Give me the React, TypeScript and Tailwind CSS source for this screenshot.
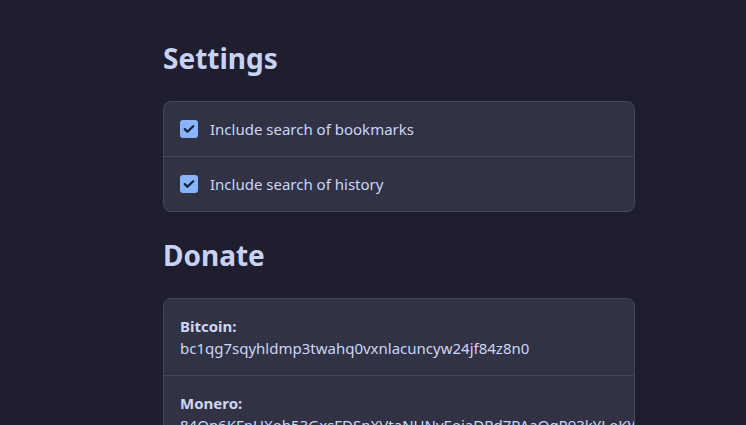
import React from "react";

const settings = [
  { id: "bookmarks", label: "Include search of bookmarks", checked: true },
  { id: "history", label: "Include search of history", checked: true },
];

const donations = [
  { name: "Bitcoin", address: "bc1qg7sqyhldmp3twahq0vxnlacuncyw24jf84z8n0" },
  {
    name: "Monero",
    address:
      "84Qp6KFnUXoh53GxsFDSnXVtaNUNvEoiaDRd7PAaQgP93kYLoKWBgQMhZCBb2AKd6JwjGKk2ZNmhLNjcnVJ9CMiF7Lu3yVb",
  },
];

const CheckIcon = () => (
  <svg viewBox="0 0 16 16" className="w-[14px] h-[14px]" fill="none">
    <path
      d="M3.2 8.2l3 3L12.8 4.8"
      stroke="#11213a"
      strokeWidth="2.6"
      strokeLinecap="round"
      strokeLinejoin="round"
    />
  </svg>
);

const App = () => {
  return (
    <div
      className="min-h-screen h-[425px] overflow-hidden bg-[#1e1e2e] text-[#cdd6f4]"
      style={{ fontFamily: '"Noto Sans", "Open Sans", sans-serif' }}
    >
      <div className="ml-[163px] w-[472px] pt-[40px]">
        {/* Settings */}
        <h1 className="text-[28px] leading-[36px] font-bold text-[#c9d2f5]">Settings</h1>
        <div className="mt-[25px] rounded-lg border border-[#45475a] bg-[#313244] overflow-hidden">
          {settings.map((s, i) => (
            <label
              key={s.id}
              className={`flex items-center gap-3 px-4 py-4 text-[15px] leading-[22px] ${
                i > 0 ? "border-t border-[#45475a]" : ""
              }`}
            >
              <span className="w-[18px] h-[18px] rounded-[3px] bg-[#89b4fa] flex items-center justify-center">
                {s.checked && <CheckIcon />}
              </span>
              {s.label}
            </label>
          ))}
        </div>

        {/* Donate */}
        <h1 className="mt-[25px] text-[28px] leading-[36px] font-bold text-[#c9d2f5]">Donate</h1>
        <div className="mt-[25px] rounded-lg border border-[#45475a] bg-[#313244] overflow-hidden">
          {donations.map((d, i) => (
            <div
              key={d.name}
              className={`px-4 py-4 text-[15px] leading-[22px] whitespace-nowrap ${
                i > 0 ? "border-t border-[#45475a]" : ""
              }`}
            >
              <div className="font-bold">{d.name}:</div>
              <div>{d.address}</div>
            </div>
          ))}
        </div>
      </div>
    </div>
  );
};

export default App;
